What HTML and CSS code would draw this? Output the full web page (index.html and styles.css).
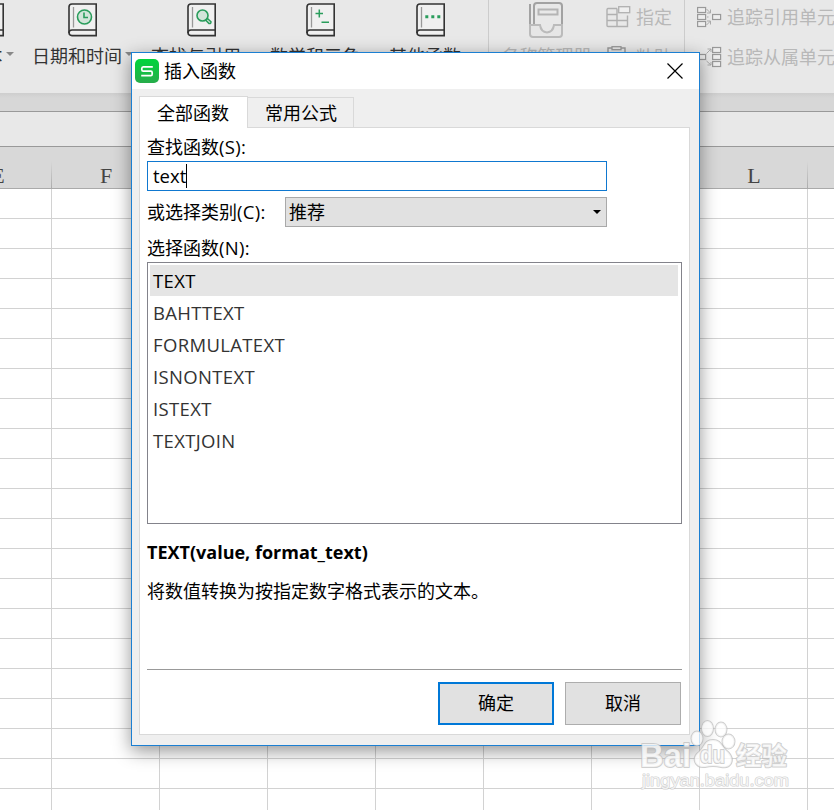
FILE: index.html
```html
<!DOCTYPE html>
<html lang="zh-CN">
<head>
<meta charset="utf-8">
<title>插入函数</title>
<link rel="stylesheet" href="styles.css">
</head>
<body>
<svg width="0" height="0" class="defs">
  <defs>
    <symbol id="book" viewBox="0 0 30 34">
      <path d="M4 1H28.2V32.6H4Q1 32.6 1 29.600V4Q1 1 4 1Z" fill="#f0f0f0" stroke="#333" stroke-width="1.6"/>
      <path d="M1 30Q1 27 4 27H28" fill="none" stroke="#333" stroke-width="1.600"/>
      <path d="M5.500 4V24.500" stroke="#999" stroke-width="1.300"/>
    </symbol>
  </defs>
</svg>
<main class="workbook">
  <div class="ribbon">
    <div class="tool tool-first">
      <svg class="book"><use href="#book"/></svg>
      <div class="caption">文本<i class="drop"></i></div>
    </div>
    <div class="tool">
      <svg class="book" viewBox="0 0 30 34"><use href="#book"/><circle cx="16.500" cy="14" r="7" fill="#d3e5da" stroke="#2a9d5c" stroke-width="1.600"/><path d="M16 9.500V14.500H20" fill="none" stroke="#2a9d5c" stroke-width="1.600"/></svg>
      <div class="caption">日期和时间<i class="drop"></i></div>
    </div>
    <div class="tool">
      <svg class="book" viewBox="0 0 30 34"><use href="#book"/><circle cx="15.500" cy="12.500" r="5.500" fill="#d3e5da" stroke="#2a9d5c" stroke-width="1.600"/><path d="M18.800 17.200L20.500 15.500L24 18.800Q24 21 22 20.500Z" fill="#d3e5da" stroke="#2a9d5c" stroke-width="1.500"/></svg>
      <div class="caption">查找与引用<i class="drop"></i></div>
    </div>
    <div class="tool">
      <svg class="book" viewBox="0 0 30 34"><use href="#book"/><path d="M9.500 10.500H17M13.300 6.500V14.500M15.500 19.300H23" stroke="#2a9d5c" stroke-width="1.500"/></svg>
      <div class="caption">数学和三角<i class="drop"></i></div>
    </div>
    <div class="tool tool-narrow">
      <svg class="book" viewBox="0 0 30 34"><use href="#book"/><path d="M9.300 13.800H12.300M15.300 13.800H18.300M21.300 13.800H24.300" stroke="#2a9d5c" stroke-width="3"/></svg>
      <div class="caption">其他函数<i class="drop"></i></div>
    </div>
    <div class="tool tool-names disabled">
      <svg class="tray" viewBox="0 0 36 38"><path d="M2 3V24M6 24V5Q6 2 9 2H31Q34 2 34 5V24" fill="none" stroke="#a2a2a2" stroke-width="2"/><rect x="10.500" y="8.500" width="19" height="5" fill="none" stroke="#b4b4b4" stroke-width="2"/><path d="M2 24H12Q13 31 19 31.500Q25 31 26 24H34V33Q34 36 31 36H5Q2 36 2 33Z" fill="#e6e6e6" stroke="#bbb" stroke-width="2"/></svg>
      <div class="caption">名称管理器</div>
    </div>
    <div class="stack stack-define disabled">
      <div class="mini"><svg width="25" height="22" viewBox="0 0 25 22"><path d="M11 2.500H2Q1 2.500 1 4V19.500Q1 20.500 2 20.500H21.500V9.500M1 8.500H11M1 14.500H21M11 2.500V20" fill="none" stroke="#b0b0b0" stroke-width="1.400"/><rect x="12.700" y=".7" width="11" height="6" fill="#efefef" stroke="#b0b0b0" stroke-width="1.300"/></svg>指定</div>
      <div class="mini"><svg width="25" height="22" viewBox="0 0 25 22"><path d="M6 2H2V21H19V2H15" fill="none" stroke="#999" stroke-width="1.400"/><rect x="6" y=".7" width="9" height="3" fill="none" stroke="#999" stroke-width="1.300"/></svg>粘贴</div>
    </div>
    <div class="stack stack-trace disabled">
      <div class="mini"><svg width="25" height="22" viewBox="0 0 25 22"><g fill="#eee" stroke="#999" stroke-width="1.200"><rect x=".6" y="1.500" width="8" height="5"/><rect x=".6" y="8.500" width="8" height="5"/><rect x=".6" y="15.500" width="8" height="5"/><rect x="15.600" y="8.500" width="8" height="5"/></g><path d="M9.500 3L13.500 7M13.500 3.500V7H10M9.500 19L13.500 15M13.500 18.500V15H10M10 11H11.500" fill="none" stroke="#aaa"/></svg>追踪引用单元格</div>
      <div class="mini"><svg width="25" height="22" viewBox="0 0 25 22"><g fill="#eee" stroke="#999" stroke-width="1.200"><rect x="15.600" y="1.500" width="8" height="5"/><rect x="15.600" y="8.500" width="8" height="5"/><rect x="15.600" y="15.500" width="8" height="5"/><rect x=".6" y="8.500" width="8" height="5"/></g><path d="M9.500 7.500L14 3M10.500 3H14V6M9.500 15L14 19M14 16V19H10.500" fill="none" stroke="#aaa"/></svg>追踪从属单元格</div>
    </div>
  </div>
  <div class="gap-band"></div>
  <div class="formula-bar"></div>
  <div class="columns"><span>E</span><span>F</span><span>G</span><span>H</span><span>I</span><span>J</span><span>K</span><span>L</span><span>M</span></div>
  <div class="cells"></div>
</main>

<section class="dialog">
  <header class="titlebar">
    <svg class="logo" width="24" height="24" viewBox="0 0 24 24"><defs><linearGradient id="g" x1="0" y1="0" x2="0" y2="1"><stop offset="0" stop-color="#00d53c"/><stop offset="1" stop-color="#27ac4b"/></linearGradient></defs><rect width="24" height="24" rx="5" fill="url(#g)"/><path d="M17.800 7.800H8.200Q6.800 7.800 6.800 9.500V10.500Q6.800 12.200 8.200 12.200H15.800Q17.200 12.200 17.200 13.700V15Q17.200 16.700 15.800 16.700H6.200" fill="none" stroke="#fff" stroke-width="1.700"/></svg>
    <h1>插入函数</h1>
    <svg class="close" width="16" height="16" viewBox="0 0 16 16"><path d="M.5 .5L15.500 15.500M15.500 .5L.5 15.500" stroke="#000" stroke-width="1.200"/></svg>
  </header>
  <div class="body">
    <nav class="tabs"><span class="tab active">全部函数</span><span class="tab">常用公式</span></nav>
    <div class="panel">
      <div class="label">查找函数<b>(S):</b></div>
      <div class="search"><span>text</span><i class="caret"></i></div>
      <div class="category">
        <div class="label">或选择类别<b>(C):</b></div>
        <div class="select">推荐<svg width="8" height="4" viewBox="0 0 8 4"><path d="M0 0H8L4 4Z"/></svg></div>
      </div>
      <div class="label label-list">选择函数<b>(N):</b></div>
      <ul class="list">
        <li class="selected">TEXT</li>
        <li>BAHTTEXT</li>
        <li>FORMULATEXT</li>
        <li>ISNONTEXT</li>
        <li>ISTEXT</li>
        <li>TEXTJOIN</li>
      </ul>
      <div class="syntax">TEXT(value, format_text)</div>
      <p class="desc">将数值转换为按指定数字格式表示的文本。</p>
      <footer class="actions"><button class="primary">确定</button><button>取消</button></footer>
    </div>
  </div>
</section>

<svg class="watermark" width="160" height="80" viewBox="0 0 160 80">
  <g fill="#fff" fill-opacity=".75" stroke="#bbb" stroke-opacity=".7" stroke-width="2" paint-order="stroke" stroke-linejoin="round">
    <text x="2" y="50.500" class="wm-name" textLength="51" lengthAdjust="spacingAndGlyphs">Bai</text>
    <ellipse cx="59" cy="22.500" rx="5.500" ry="7"/>
    <ellipse cx="69.500" cy="12.500" rx="5.500" ry="7.500"/>
    <ellipse cx="83" cy="13.500" rx="5.500" ry="7"/>
    <ellipse cx="90.500" cy="25.500" rx="6" ry="7"/>
    <path d="M75 24C66 24 67 31 61 36C53 42 57 52 67 51Q75 49 83 51C94 53 97 43 90 36C83 31 84 24 75 24Z"/>
    <text x="62" y="47" class="wm-du" textLength="25" lengthAdjust="spacingAndGlyphs">du</text>
    <text x="98" y="49" class="wm-cn" textLength="51" lengthAdjust="spacingAndGlyphs">经验</text>
    <text x="4" y="70" class="wm-url" textLength="147" lengthAdjust="spacingAndGlyphs">jingyan.baidu.com</text>
  </g>
</svg>
</body>
</html>
```
FILE: styles.css
```css
* { box-sizing: border-box; }
body {
  margin: 0;
  height: 810px;
  overflow: hidden;
  position: relative;
  font: 18px/24px "Open Sans", "Noto Sans CJK SC", sans-serif;
  color: #000;
}
.defs { position: absolute; }
.workbook { height: 810px; display: flex; flex-direction: column; overflow: hidden; }

.ribbon { display: flex; height: 93px; flex: none; background: #e8e8e8; color: #333; overflow: hidden; }
.tool { flex: none; width: 119px; padding-top: 3px; display: flex; flex-direction: column; align-items: center; }
.tool-first { width: 66px; margin-left: -43px; }
.tool-narrow { width: 101px; }
.tool-names { width: 116px; margin-left: 7px; padding-top: 1px; padding-right: 2px; border-left: 1px solid #ccc; }
.book { width: 30px; height: 34px; }
.tray { width: 36px; height: 38px; }
.caption { display: flex; align-items: center; gap: 3px; margin-top: 7px; white-space: nowrap; }
.tool-names .caption { margin-top: 5px; padding-left: 2px; }
.drop { border: 4px solid transparent; border-top-color: #888; border-bottom: 0; margin-top: -5px; }
.disabled { color: #b8b8b8; }
.stack { flex: none; display: flex; flex-direction: column; gap: 16px; padding-top: 5px; }
.stack-define { width: 81px; padding-left: 2px; border-right: 1px solid #ccc; }
.stack-trace { padding-left: 12px; }
.mini { display: flex; align-items: center; gap: 5px; height: 24px; white-space: nowrap; }

.gap-band { flex: none; height: 19px; border-bottom: 1px solid #999; background: linear-gradient(#cecece, #d7d7d7 5px); }
.formula-bar { flex: none; height: 35px; border-bottom: 1px solid #999; background: #e8e8e8; }
.columns { flex: none; height: 42px; display: flex; margin-left: -56px; width: 972px; border-bottom: 1px solid #aaa; background: #d8d8d8; }
.columns span {
  width: 108px;
  padding: 16px 0 0;
  text-align: center;
  font: 22px/26px "Liberation Serif", serif;
  color: #444;
  background: linear-gradient(#d8d8d8, #aaa) right 14px / 1px 28px no-repeat;
}
.cells {
  flex: 1;
  background:
    repeating-linear-gradient(to right, transparent 0 107px, #d2d2d2 107px 108px) -56px 0 / 972px 100%,
    repeating-linear-gradient(to bottom, #fff 0 29px, #d2d2d2 29px 30px);
}

.dialog {
  position: absolute;
  left: 131px;
  top: 52px;
  width: 569px;
  height: 694px;
  display: flex;
  flex-direction: column;
  border: 1px solid #1b7fd2;
  background: #efefef;
  box-shadow: 0 5px 17px rgba(0, 0, 0, .42);
}
.titlebar { height: 36px; flex: none; display: flex; align-items: center; padding: 0 16px 0 3px; background: #fff; }
h1 { margin: 0 auto 0 5px; font-size: 18px; font-weight: 400; line-height: 24px; }
.body { flex: 1; display: flex; flex-direction: column; padding: 7px 9px 10px 7px; }
.tabs { display: flex; align-items: flex-end; height: 32px; flex: none; margin-bottom: -1px; position: relative; }
.tab { width: 106px; height: 31px; padding-left: 1px; border: 1px solid #d9d9d9; border-left: 0; text-align: center; line-height: 31px; }
.tab.active { width: 109px; height: 32px; padding: 0 1px 0 0; border-left: 1px solid #d9d9d9; border-bottom: 0; background: #fff; line-height: 32px; }
.panel { flex: 1; border: 1px solid #d9d9d9; background: #fff; padding: 7px 7px 9px; display: flex; flex-direction: column; }
.label { height: 26px; line-height: 24px; }
.label b { font-weight: 400; font-size: 18.5px; line-height: 20px; letter-spacing: .3px; }
.search { width: 460px; height: 30px; border: 1px solid #0f78d0; display: flex; align-items: center; padding-left: 5px; }
.search span { font-size: 18.5px; }
.caret { width: 1px; height: 24px; background: #000; }
.category { display: flex; align-items: center; margin-top: 6px; height: 30px; }
.category .label { width: 138px; line-height: 26px; }
.select { width: 322px; height: 30px; padding: 0 5px 0 3px; border: 1px solid #a9a9a9; background: #e1e1e1; display: flex; align-items: center; justify-content: space-between; }
.label-list { margin-top: 9px; }
.list { list-style: none; margin: 0; padding: 2px 3px 2px 2px; width: 535px; height: 262px; border: 1px solid #83838b; color: #333; }
.list li { height: 32px; padding-left: 3px; line-height: 32px; font-size: 18.5px; letter-spacing: .35px; }
.list .selected { height: 31px; margin-bottom: 1px; background: #e5e5e5; color: #000; }
.syntax { margin-top: 16px; font-weight: 700; }
.desc { margin: 15px 0 0; }
.actions { margin-top: auto; width: 535px; height: 56px; padding: 12px 1px 0 0; display: flex; justify-content: flex-end; gap: 11px; border-top: 1px solid #999; }
button { width: 116px; height: 43px; padding: 0 0 1px; border: 1px solid #adadad; background: #e1e1e1; color: #000; font: inherit; }
.primary { border: 2px solid #0078d7; }

.watermark { position: absolute; left: 638px; top: 716px; font-family: "Liberation Sans", "Noto Sans CJK SC", sans-serif; }
.wm-name { font-size: 34px; font-weight: 700; }
.wm-du { font-size: 23px; font-weight: 700; }
.wm-cn { font-size: 25px; font-weight: 700; font-family: "Noto Sans CJK SC", sans-serif; }
.wm-url { font-size: 17px; stroke-width: 1.2px; }
```
